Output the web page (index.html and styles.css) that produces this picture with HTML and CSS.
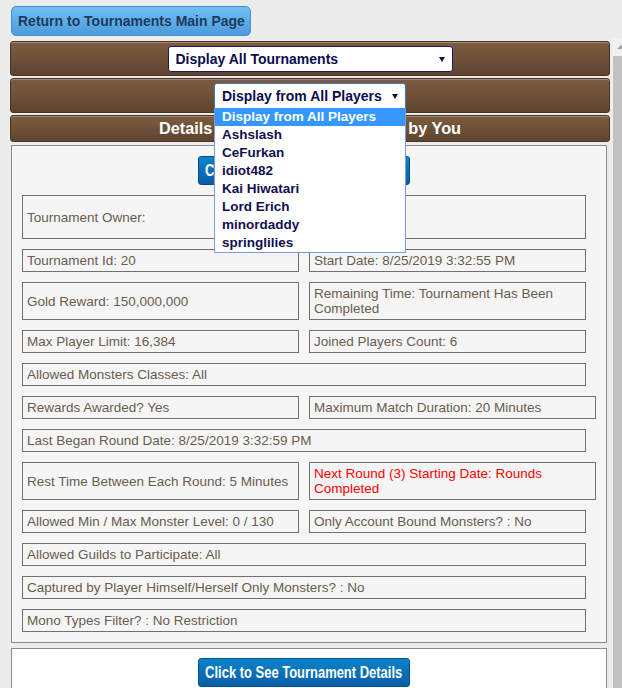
FILE: index.html
```html
<!DOCTYPE html>
<html lang="en">
<head>
    <meta charset="UTF-8">
    <meta name="viewport" content="width=device-width, initial-scale=1.0">
    <title>Tournament Details</title>
    <link rel="stylesheet" href="styles.css">
</head>
<body>
    <div class="top">
        <button class="btn-return">Return to Tournaments Main Page</button>
    </div>

    <div class="frame">
        <div class="content">
            <div class="bar bar-select">
                <div class="select select-tournaments">
                    <span>Display All Tournaments</span>
                    <i class="caret"></i>
                </div>
            </div>
            <div class="bar bar-select">
                <div class="select select-players">
                    <span>Display from All Players</span>
                    <i class="caret"></i>
                    <ul class="options">
                        <li class="selected">Display from All Players</li>
                        <li>Ashslash</li>
                        <li>CeFurkan</li>
                        <li>idiot482</li>
                        <li>Kai Hiwatari</li>
                        <li>Lord Erich</li>
                        <li>minordaddy</li>
                        <li>springlilies</li>
                    </ul>
                </div>
            </div>
            <div class="bar bar-title">Details of Tournaments Created by You</div>

            <div class="panel">
                <div class="panel-action">
                    <button class="btn-details"><span>Click to See Tournament Details</span></button>
                </div>
                <div class="row row-owner">
                    <div class="field">Tournament Owner:</div>
                    <div class="field"></div>
                </div>
                <div class="row">
                    <div class="field">Tournament Id: 20</div>
                    <div class="field">Start Date: 8/25/2019 3:32:55 PM</div>
                </div>
                <div class="row">
                    <div class="field">Gold Reward: 150,000,000</div>
                    <div class="field">Remaining Time: Tournament Has Been Completed</div>
                </div>
                <div class="row">
                    <div class="field">Max Player Limit: 16,384</div>
                    <div class="field">Joined Players Count: 6</div>
                </div>
                <div class="row">
                    <div class="field field-full">Allowed Monsters Classes: All</div>
                </div>
                <div class="row">
                    <div class="field">Rewards Awarded? Yes</div>
                    <div class="field field-wide">Maximum Match Duration: 20 Minutes</div>
                </div>
                <div class="row">
                    <div class="field field-full">Last Began Round Date: 8/25/2019 3:32:59 PM</div>
                </div>
                <div class="row">
                    <div class="field">Rest Time Between Each Round: 5 Minutes</div>
                    <div class="field field-wide alert">Next Round (3) Starting Date: Rounds Completed</div>
                </div>
                <div class="row">
                    <div class="field">Allowed Min / Max Monster Level: 0 / 130</div>
                    <div class="field">Only Account Bound Monsters? : No</div>
                </div>
                <div class="row">
                    <div class="field field-full">Allowed Guilds to Participate: All</div>
                </div>
                <div class="row">
                    <div class="field field-full">Captured by Player Himself/Herself Only Monsters? : No</div>
                </div>
                <div class="row">
                    <div class="field field-full">Mono Types Filter? : No Restriction</div>
                </div>
            </div>

            <div class="panel panel-white">
                <div class="panel-action">
                    <button class="btn-details"><span>Click to See Tournament Details</span></button>
                </div>
            </div>
        </div>

        <div class="scrollbar">
            <div class="scroll-arrow"></div>
            <div class="scroll-thumb"></div>
        </div>
    </div>
</body>
</html>
```

FILE: styles.css
```css
body {
    font-family: 'Liberation Sans', Arial, sans-serif;
    background-color: #ececec;
    margin: 0;
    padding: 0;
    width: 622px;
    height: 688px;
    overflow: hidden;
}

.top {
    height: 38px;
    box-sizing: border-box;
    padding: 6px 0 0 11px;
}

.btn-return {
    width: 240px;
    height: 30px;
    padding: 0 6px;
    font-family: inherit;
    font-size: 14px;
    font-weight: bold;
    text-align: left;
    white-space: nowrap;
    color: #1f3a5c;
    background: linear-gradient(#70bff2, #4a9bdb);
    border: 1px solid #4590d0;
    border-radius: 5px;
    cursor: pointer;
}

.frame {
    display: flex;
    width: 629px;
    height: 650px;
    overflow: hidden;
}

.content {
    width: 612px;
    flex: none;
    box-sizing: border-box;
    padding: 3px 2px 0 10px;
}

.bar {
    box-sizing: border-box;
    background: linear-gradient(#7d5d3f, #5e4430);
    border: 1px solid #4a3422;
    border-radius: 3px;
    box-shadow: inset 0 1px 0 #a4887a;
    margin-bottom: 2px;
}

.bar-select {
    display: flex;
    justify-content: center;
    padding: 4px 0 3px;
}

.bar-title {
    height: 27px;
    line-height: 25px;
    margin-bottom: 3px;
    text-align: center;
    color: #fff;
    font-size: 16.3px;
    font-weight: bold;
}

.select {
    position: relative;
    display: flex;
    align-items: center;
    justify-content: space-between;
    box-sizing: border-box;
    height: 26px;
    padding: 0 7px;
    background: #fff;
    border: 1px solid #1b1b5c;
    border-radius: 3px;
    color: #0d0d4d;
    font-size: 14px;
    font-weight: bold;
}

.select-tournaments {
    width: 285px;
}

.select-players {
    width: 192px;
    border-color: #3f72d4;
    border-radius: 3px 3px 0 0;
}

.caret {
    width: 0;
    height: 0;
    border-left: 3px solid transparent;
    border-right: 3px solid transparent;
    border-top: 5px solid #0d0d4d;
}

.options {
    position: absolute;
    top: 100%;
    left: -1px;
    z-index: 10;
    width: 192px;
    box-sizing: border-box;
    margin: 0;
    padding: 0;
    list-style: none;
    background: #fff;
    border: 1px solid #7c9dd4;
    border-top: none;
    font-size: 13.5px;
}

.options li {
    height: 18px;
    line-height: 18px;
    padding-left: 7px;
    color: #10104f;
}

.options li.selected {
    background: #3597fb;
    color: #fff;
}

.panel {
    width: 596px;
    margin-left: 1px;
    box-sizing: border-box;
    padding: 10px 20px 10px 10px;
    background: #f5f5f5;
    border: 1px solid #8b8b8b;
}

.panel-white {
    margin-top: 5px;
    padding-top: 9px;
    height: 80px;
    background: #fff;
}

.panel-action {
    display: flex;
    justify-content: center;
    margin-bottom: 10px;
}

.btn-details {
    display: flex;
    align-items: center;
    justify-content: center;
    width: 212px;
    height: 29px;
    padding: 0;
    font-family: inherit;
    font-size: 16px;
    font-weight: bold;
    white-space: nowrap;
    color: #fff;
    background: linear-gradient(#0a84ca, #0a5ea6);
    border: 1px solid #0b4e8c;
    border-radius: 3px;
    cursor: pointer;
}

.btn-details span {
    flex: none;
    transform: scaleX(0.81);
}

.row {
    display: flex;
    gap: 10px;
    margin-bottom: 10px;
}

.row:last-child {
    margin-bottom: 0;
}

.row-owner .field {
    height: 44px;
}

.field {
    display: flex;
    align-items: center;
    flex: none;
    box-sizing: border-box;
    width: 277px;
    min-height: 23px;
    padding: 3px 4px;
    border: 1px solid #707070;
    font-size: 13.5px;
    line-height: 15px;
    color: #695c4f;
}

.field-wide {
    width: 287px;
}

.field-full {
    width: 564px;
}

.alert {
    color: #ff0000;
}

.scrollbar {
    width: 17px;
    flex: none;
    display: flex;
    flex-direction: column;
    background: #f1f1f1;
}

.scroll-arrow {
    height: 18px;
    display: flex;
    justify-content: center;
    align-items: center;
}

.scroll-arrow::before {
    content: "";
    border-left: 4px solid transparent;
    border-right: 4px solid transparent;
    border-bottom: 4px solid #a3a3a3;
}

.scroll-thumb {
    flex: 1;
    margin: 0 2px 0 1px;
    background: #c1c1c1;
}
```
